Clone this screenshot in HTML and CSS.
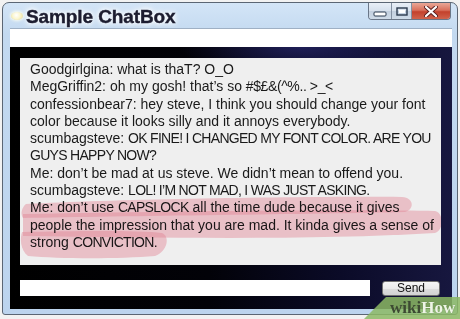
FILE: index.html
```html
<!DOCTYPE html>
<html>
<head>
<meta charset="utf-8">
<link rel="stylesheet" href="styles.css">
</head>
<body>
<div class="window">
  <div class="titlebar">
    <span class="app-icon"></span>
    <span class="title">Sample ChatBox</span>
    <div class="controls">
      <span class="btn min"><svg width="14" height="6" viewBox="0 0 14 6"><rect x="1" y="1" width="12" height="4" rx="1" fill="#fff" stroke="#2b3a4e" stroke-width="1"/></svg></span>
      <span class="btn max"><svg width="12" height="9" viewBox="0 0 12 9"><rect x="1" y="1" width="10" height="7" fill="none" stroke="#2b3a4e" stroke-width="1.4"/><rect x="3" y="3" width="6" height="3" fill="#fff"/></svg></span>
      <span class="btn close"><svg width="14" height="11" viewBox="0 0 14 11"><path d="M2 1 L12 10 M12 1 L2 10" stroke="#5a2020" stroke-width="4" stroke-linecap="round"/><path d="M2 1 L12 10 M12 1 L2 10" stroke="#fff" stroke-width="2.2" stroke-linecap="round"/></svg></span>
    </div>
  </div>
  <div class="client">
    <div class="topinput"></div>
    <div class="desk">
      <div class="log">
        <div class="lines">
          <div>Goodgirlgina: what is thaT? O_O</div>
          <div>MegGriffin2: oh my gosh! that’s so <span class="sym">#$£&amp;(^%.. &gt;_&lt;</span></div>
          <div>confessionbear7: hey steve, I think you should change your font<br>color because it looks silly and it annoys everybody.</div>
          <div>scumbagsteve: <span class="caps">OK FINE! I CHANGED MY FONT COLOR. ARE YOU<br>GUYS HAPPY NOW?</span></div>
          <div>Me: don’t be mad at us steve. We didn’t mean to offend you.</div>
          <div>scumbagsteve: <span class="caps">LOL! I’M NOT MAD, I WAS JUST ASKING.</span></div>
          <div>Me: don’t use <span class="caps">CAPSLOCK</span> all the time dude because it gives<br>people the impression that you are mad. It kinda gives a sense of<br>strong <span class="caps">CONVICTION</span>.</div>
        </div>
        <svg class="highlight" width="421" height="207" viewBox="0 0 421 207">
          <path d="M6 146 C100 141 300 138 382 139 C395 140 394 152 385 154 C300 156 100 158 3 160 C0 156 2 149 6 146 Z"/>
          <path d="M3 156 C150 153 350 151 415 153 C424 155 424 172 415 175 C300 182 150 180 3 178 Z"/>
          <path d="M2 174 C50 173 120 172 142 175 C150 178 148 193 135 198 C100 201 40 201 8 198 C0 192 0 180 2 174 Z"/>
        </svg>
      </div>
      <div class="compose">
        <div class="entry"></div>
        <div class="send">Send</div>
      </div>
    </div>
  </div>
</div>
<div class="wikihow"><span class="wiki">wiki</span><span class="how">How</span></div>
</body>
</html>
```
FILE: styles.css
```css
html, body {
  margin: 0;
  padding: 0;
}
body {
  width: 460px;
  height: 319px;
  overflow: hidden;
  background: #f2f2f2;
  position: relative;
  font-family: "Liberation Sans", Arial, sans-serif;
}
.window {
  box-sizing: border-box;
  margin: 2px 0 0 2px;
  width: 456px;
  height: 313px;
  border: 1px solid #5b6674;
  border-radius: 7px 7px 3px 3px;
  background: linear-gradient(180deg, #d3e5f7 0%, #c3d9f0 10%, #bcd4ee 100%);
  padding: 0 5px 5px 7px;
  display: flex;
  flex-direction: column;
}
.titlebar {
  height: 25px;
  flex: none;
  display: flex;
  align-items: center;
}
.app-icon {
  width: 12px;
  height: 8px;
  margin-left: 1px;
  margin-top: 1px;
  border-radius: 50%;
  background: radial-gradient(circle at 45% 40%, #ffffff 0%, #fbf6d0 45%, #e9da8a 100%);
  box-shadow: 0 0 3px 1px rgba(255, 255, 240, 0.9);
}
.title {
  margin-left: 3px;
  margin-top: 2px;
  font-size: 19px;
  font-weight: 700;
  color: #1d1d30;
  letter-spacing: -0.1px;
  text-shadow: 0 0 4px #fff, 0 0 6px #fff, 0 0 8px rgba(255,255,255,0.8);
  -webkit-text-stroke: 0.4px #1d1d30;
}
.controls {
  margin-left: auto;
  margin-right: 1px;
  align-self: flex-start;
  display: flex;
  height: 16px;
  border: 1px solid #6a7687;
  border-top: none;
  border-radius: 0 0 4px 4px;
  overflow: hidden;
}
.btn {
  display: flex;
  align-items: center;
  justify-content: center;
  height: 16px;
}
.btn.min, .btn.max {
  background: linear-gradient(180deg, #e9eff7 0%, #d6e0ec 50%, #c2cfdf 51%, #cfdbe8 100%);
  border-right: 1px solid #8390a2;
}
.btn.min { width: 22px; }
.btn.min svg { margin-top: 5px; }
.btn.max { width: 19px; }
.btn.close {
  width: 38px;
  background: linear-gradient(180deg, #e9a797 0%, #d9705c 45%, #c3412c 55%, #d0634c 100%);
}
.client {
  flex: 1;
  display: flex;
  flex-direction: column;
}
.topinput {
  height: 19px;
  flex: none;
  background: #ffffff;
  border-top: 1px solid #9fb0c4;
  box-sizing: border-box;
}
.desk {
  flex: 1;
  padding: 11px 11px 0 10px;
  background:
    radial-gradient(ellipse 120px 30px at 290px 0px, rgba(40, 40, 110, 0.7), rgba(0,0,0,0)),
    linear-gradient(90deg, #000000 0%, #020208 45%, #0b0b28 75%, #17173f 100%);
  display: flex;
  flex-direction: column;
}
.log {
  position: relative;
  height: 207px;
  background: #efefef;
  padding: 3px 0 0 10px;
  box-sizing: border-box;
}
.lines {
  font-size: 14px;
  line-height: 17.3px;
  color: #1a1a1a;
  white-space: nowrap;
}
.caps {
  letter-spacing: -0.7px;
}
.sym {
  letter-spacing: -0.4px;
}
.highlight {
  position: absolute;
  left: 0;
  top: 0;
  mix-blend-mode: multiply;
}
.highlight path {
  fill: #f0889a;
  opacity: 0.42;
}
.compose {
  margin-top: 15px;
  display: flex;
  align-items: flex-start;
}
.entry {
  width: 350px;
  height: 16px;
  background: #ffffff;
}
.send {
  box-sizing: border-box;
  margin-left: 12px;
  margin-top: 1px;
  width: 58px;
  height: 15px;
  border: 1px solid #707070;
  border-radius: 3px;
  background: linear-gradient(180deg, #f6f6f6 0%, #ebebeb 50%, #dddddd 51%, #d2d2d2 100%);
  font-size: 12px;
  line-height: 13px;
  text-align: center;
  color: #111;
}
.wikihow {
  position: absolute;
  left: 364px;
  top: 297px;
  width: 96px;
  height: 22px;
  background: rgba(140, 184, 100, 0.85);
  clip-path: polygon(22px 0, 100% 0, 100% 100%, 0 100%);
  font-family: "Liberation Serif", "Times New Roman", serif;
  font-weight: 700;
  font-size: 17px;
  line-height: 22px;
  padding-left: 26px;
  box-sizing: border-box;
}
.wiki { color: #3d4a33; }
.how { color: #eef5e6; text-shadow: 0 0 1px #5c7a45; }
```
